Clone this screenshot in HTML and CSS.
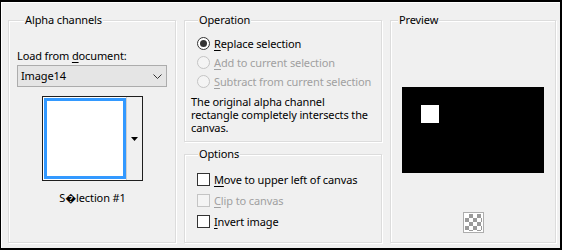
FILE: index.html
```html
<!DOCTYPE html>
<html>
<head>
<meta charset="utf-8">
<link rel="stylesheet" href="styles.css">
</head>
<body>
<div class="window">
  <div class="group alpha">
    <div class="legend">Alpha channels</div>
    <div class="label">Load from <u>d</u>ocument:</div>
    <div class="select">
      <span>Image14</span>
      <svg class="chev" width="9" height="5" viewBox="0 0 9 5"><polyline points="0.5,0.5 4.5,4.5 8.5,0.5" fill="none" stroke="#333" stroke-width="1"/></svg>
    </div>
    <div class="swatch">
      <div class="swatch-cell"><div class="swatch-color"></div></div>
      <div class="swatch-btn"><svg width="7" height="4" viewBox="0 0 7 4"><polygon points="0,0 7,0 3.5,4" fill="#000"/></svg></div>
    </div>
    <div class="caption">S&#xFFFD;lection #1</div>
  </div>
  <div class="mid">
    <div class="group op">
      <div class="legend">Operation</div>
      <div class="rows">
        <div class="row"><span class="radio checked"></span><span><u>R</u>eplace selection</span></div>
        <div class="row dis"><span class="radio"></span><span><u>A</u>dd to current selection</span></div>
        <div class="row dis"><span class="radio"></span><span><u>S</u>ubtract from current selection</span></div>
      </div>
      <div class="desc">The original alpha channel<br>rectangle completely intersects the<br>canvas.</div>
    </div>
    <div class="group opts">
      <div class="legend">Options</div>
      <div class="checks">
        <div class="row crow"><span class="check"></span><span><u>M</u>ove to upper left of canvas</span></div>
        <div class="row crow dis"><span class="check"></span><span><u>C</u>lip to canvas</span></div>
        <div class="row crow"><span class="check"></span><span><u>I</u>nvert image</span></div>
      </div>
    </div>
  </div>
  <div class="group preview">
    <div class="legend">Preview</div>
    <div class="canvas"><div class="sel"></div></div>
    <div class="checker"><div class="checker-in"></div></div>
  </div>
</div>
</body>
</html>
```
FILE: styles.css
```css
* { box-sizing: border-box; }
html, body { margin: 0; padding: 0; background: #f0f0f0; }
body {
  font-family: "Segoe UI", "Noto Sans", "DejaVu Sans", sans-serif;
  font-size: 11px;
  line-height: 14px;
  letter-spacing: -0.12px;
  color: #000;
}
u { text-decoration: underline; text-underline-offset: 2px; }
.window {
  width: 562px;
  height: 250px;
  background: #f0f0f0;
  border-style: solid;
  border-color: #000;
  border-width: 2px 2px 2px 1px;
  box-shadow: inset 1px 1px 0 #fff;
  padding: 18px 4px 5px 7px;
  display: flex;
  gap: 8px;
}
.group {
  border: 1px solid #dcdcdc;
  box-shadow: inset 1px 1px 0 #fff, 1px 1px 0 #fff;
  display: flex;
  flex-direction: column;
}
.legend {
  align-self: flex-start;
  margin-top: -8px;
  margin-left: 7px;
  padding: 0 1px;
  background: #f0f0f0;
  line-height: 14px;
  white-space: nowrap;
}
.alpha {
  width: 168px;
  padding: 0 8px;
}
.label { margin-top: 22px; }
.select {
  margin-top: 2px;
  height: 22px;
  background: #e5e5e5;
  border: 1px solid #acacac;
  display: flex;
  align-items: center;
  justify-content: space-between;
  padding: 0 4px 0 3px;
}
.chev { margin-top: 1px; }
.swatch {
  margin: 9px auto 0;
  width: 101px;
  height: 85px;
  border: 1px solid #1e1e1e;
  display: flex;
  background: #fff;
}
.swatch-cell {
  width: 83px;
  padding: 1px 0 1px 1px;
  background: #fff;
}
.swatch-color {
  height: 100%;
  border: 3px solid #3399ff;
  background: #fff;
}
.swatch-btn {
  flex: 1;
  background: #f0f0f0;
  border-left: 1px solid #d0d0d0;
  display: flex;
  align-items: center;
  justify-content: center;
  padding-left: 1px;
}
.caption {
  margin-top: 10px;
  text-align: center;
  padding-left: 1px;
}
.mid {
  width: 198px;
  display: flex;
  flex-direction: column;
  gap: 12px;
}
.op {
  height: 122px;
  padding: 0 6px;
}
.rows { margin-top: 7px; padding-left: 6px; }
.row {
  height: 19px;
  display: flex;
  align-items: center;
  gap: 4px;
  white-space: nowrap;
}
.row.dis { color: #a0a0a0; }
.radio {
  width: 13px;
  height: 13px;
  border-radius: 50%;
  border: 1px solid #333;
  background: #fff;
  display: flex;
  align-items: center;
  justify-content: center;
  flex: none;
}
.radio.checked::after {
  content: "";
  width: 7px;
  height: 7px;
  border-radius: 50%;
  background: #333;
}
.dis .radio { border-color: #c4c4c4; background: #f4f4f4; }
.desc {
  margin-top: 4px;
  line-height: 13px;
  white-space: nowrap;
}
.opts {
  flex: 1;
  padding: 0 6px;
}
.checks { margin-top: 8px; padding-left: 6px; }
.crow { height: 21px; }
.check {
  width: 13px;
  height: 13px;
  border: 1px solid #333;
  background: #fff;
  flex: none;
}
.dis .check { border-color: #c4c4c4; background: #f4f4f4; }
.preview {
  flex: 1;
  align-items: center;
}
.preview .legend { align-self: flex-start; }
.canvas {
  margin-top: 60px;
  margin-right: 1px;
  width: 142px;
  height: 86px;
  background: #000;
  padding: 18px 0 0 19px;
}
.sel {
  width: 18px;
  height: 18px;
  background: #fff;
}
.checker {
  margin-top: 39px;
  width: 21px;
  height: 21px;
  border: 1px solid #adadad;
  background: #fff;
  padding: 1px;
}
.checker-in {
  width: 100%;
  height: 100%;
  background-color: #fff;
  background-image: conic-gradient(#9a9a9a 25%, #fff 0 50%, #9a9a9a 0 75%, #fff 0);
  background-size: 8px 8px;
}
```
